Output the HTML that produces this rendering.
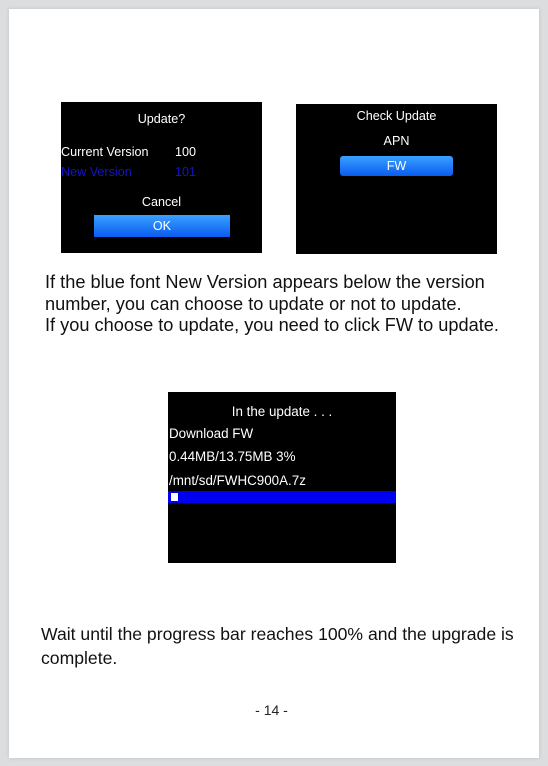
<!DOCTYPE html>
<html><head><style>
body{margin:0;width:548px;height:766px;background:#dcdddf;position:relative;overflow:hidden;font-family:"Liberation Sans",sans-serif}
.page{position:absolute;left:9px;top:9px;width:530px;height:749px;background:#fff;box-shadow:0 0 4px rgba(0,0,0,.12)}
.a{position:absolute;white-space:nowrap}
.scr{position:absolute;background:#000;color:#fff;font-size:12.6px}
.btn{position:absolute;background:linear-gradient(#3aa0ff,#0a5cf0);border-radius:3px;text-align:center;color:#fff}
.t{font-size:17.6px;color:#111;line-height:21.5px}
</style></head><body>
<div class="page"></div>
<div class="scr" style="left:61px;top:102px;width:201px;height:151px">
 <div class="a" style="left:0;width:201px;text-align:center;top:10px">Update?</div>
 <div class="a" style="left:0;top:43px">Current Version</div>
 <div class="a" style="left:114px;top:43px">100</div>
 <div class="a" style="left:0;top:63px;color:#1414c8">New Version</div>
 <div class="a" style="left:114px;top:63px;color:#1414c8">101</div>
 <div class="a" style="left:0;width:201px;text-align:center;top:93px">Cancel</div>
 <div class="btn" style="left:33px;top:113px;width:136px;height:22px;line-height:22px;border-radius:0">OK</div>
</div>
<div class="scr" style="left:296px;top:104px;width:201px;height:150px">
 <div class="a" style="left:0;width:201px;text-align:center;top:5px">Check Update</div>
 <div class="a" style="left:0;width:201px;text-align:center;top:30px">APN</div>
 <div class="btn" style="left:44px;top:52px;width:113px;height:20px;line-height:20px">FW</div>
</div>
<div class="a t" style="left:45px;top:272px;font-size:18.2px">If the blue font New Version appears below the version<br>number, you can choose to update or not to update.<br>If you choose to update, you need to click FW to update.</div>
<div class="scr" style="left:168px;top:392px;width:228px;height:171px;font-size:13.4px">
 <div class="a" style="left:0;width:228px;text-align:center;top:12px">In the update . . .</div>
 <div class="a" style="left:1px;top:34px">Download FW</div>
 <div class="a" style="left:1px;top:57px">0.44MB/13.75MB 3%</div>
 <div class="a" style="left:1px;top:81px">/mnt/sd/FWHC900A.7z</div>
 <div class="a" style="left:0;top:99px;width:228px;height:12px;background:#0000f0"></div>
 <div class="a" style="left:3px;top:101px;width:7px;height:8px;background:#fff"></div>
</div>
<div class="a t" style="left:41px;top:622px;line-height:24px">Wait until the progress bar reaches 100% and the upgrade is<br>complete.</div>
<div class="a" style="left:0;width:543px;text-align:center;top:702px;font-size:14px;color:#222">- 14 -</div>
</body></html>
